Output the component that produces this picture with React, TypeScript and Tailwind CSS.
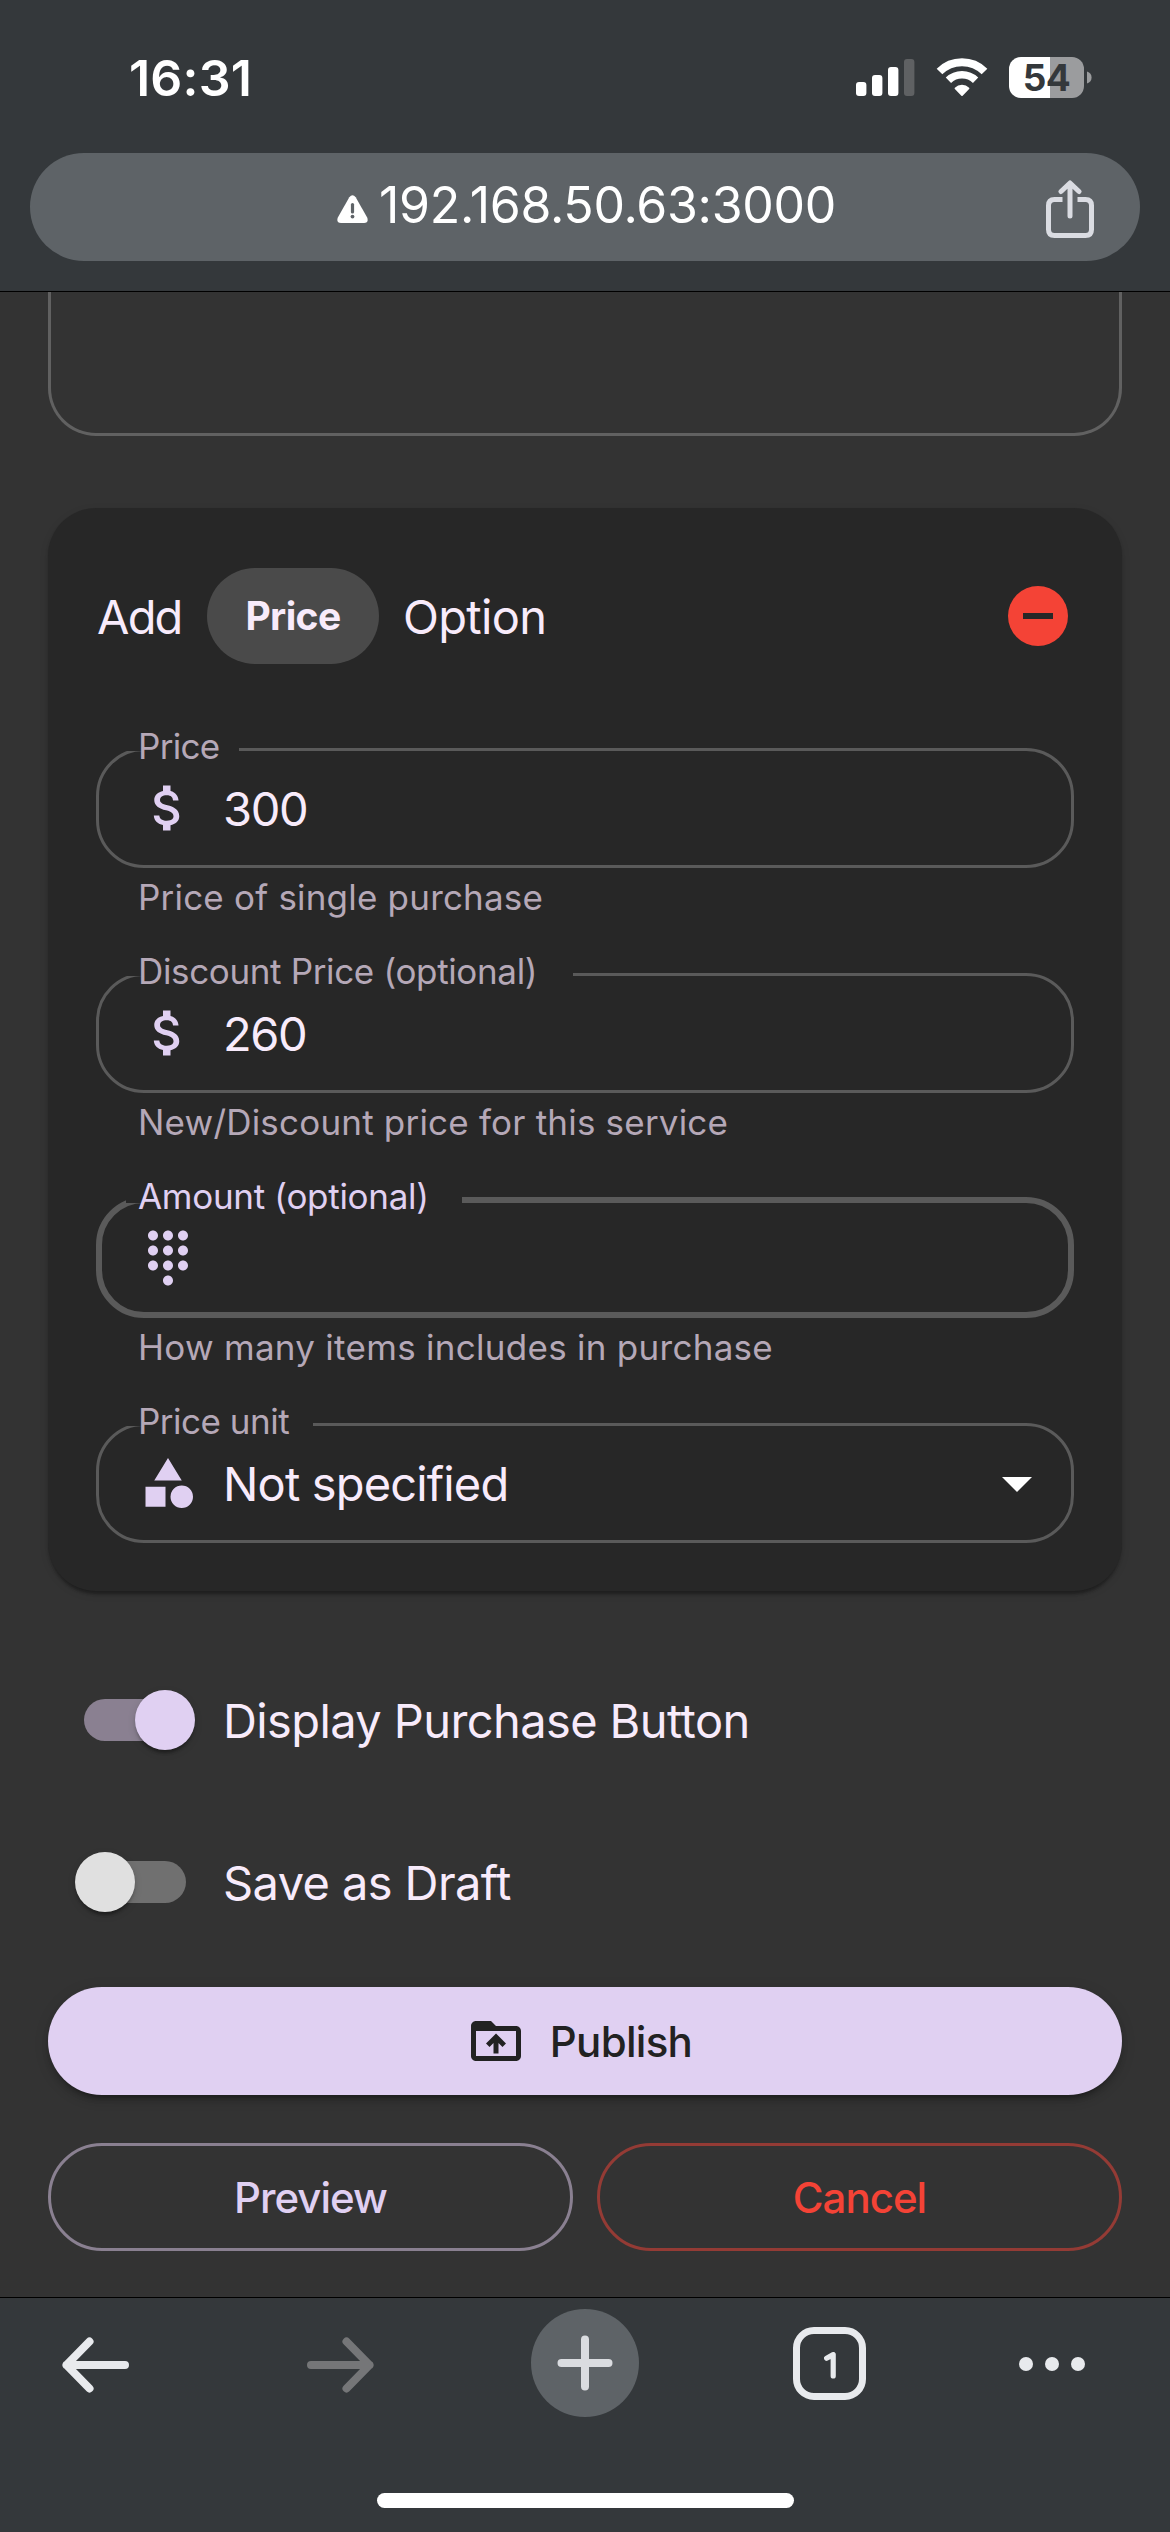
import React from "react";

const ICONS = {
  money:
    "M11.8 10.9c-2.27-.59-3-1.2-3-2.15 0-1.09 1.01-1.85 2.7-1.85 1.78 0 2.44.85 2.5 2.1h2.21c-.07-1.72-1.12-3.3-3.21-3.81V3h-3v2.16c-1.94.42-3.5 1.68-3.5 3.61 0 2.31 1.91 3.46 4.7 4.13 2.5.6 3 1.48 3 2.41 0 .69-.49 1.79-2.7 1.79-2.06 0-2.87-.92-2.98-2.1h-2.2c.12 2.19 1.76 3.42 3.68 3.83V21h3v-2.15c1.95-.37 3.5-1.5 3.5-3.55 0-2.84-2.43-3.81-4.7-4.4z",
  dialpad:
    "M12 19c-1.1 0-2 .9-2 2s.9 2 2 2 2-.9 2-2-.9-2-2-2zM6 1c-1.1 0-2 .9-2 2s.9 2 2 2 2-.9 2-2-.9-2-2-2zm0 6c-1.1 0-2 .9-2 2s.9 2 2 2 2-.9 2-2-.9-2-2-2zm0 6c-1.1 0-2 .9-2 2s.9 2 2 2 2-.9 2-2-.9-2-2-2zm12-8c1.1 0 2-.9 2-2s-.9-2-2-2-2 .9-2 2 .9 2 2 2zm-6 8c-1.1 0-2 .9-2 2s.9 2 2 2 2-.9 2-2-.9-2-2-2zm6 0c-1.1 0-2 .9-2 2s.9 2 2 2 2-.9 2-2-.9-2-2-2zm0-6c-1.1 0-2 .9-2 2s.9 2 2 2 2-.9 2-2-.9-2-2-2zm-6 0c-1.1 0-2 .9-2 2s.9 2 2 2 2-.9 2-2-.9-2-2-2zm0-6c-1.1 0-2 .9-2 2s.9 2 2 2 2-.9 2-2-.9-2-2-2z",
  category:
    "M12 2l-5.5 9h11zM17.5 13a4.5 4.5 0 1 0 0 9 4.5 4.5 0 0 0 0-9zM3 13.5h8v8H3z",
  folderUp:
    "M20 6h-8l-2-2H4c-1.1 0-1.99.9-1.99 2L2 18c0 1.1.9 2 2 2h16c1.1 0 2-.9 2-2V8c0-1.1-.9-2-2-2zm0 12H4V8h16v10zM8 13.01l1.41 1.41L11 12.84V17h2v-4.16l1.59 1.59L16 13.01 12.01 9 8 13.01z",
};

function Icon({ d, className }: { d: string; className: string }) {
  return (
    <svg viewBox="0 0 24 24" fill="currentColor" className={className}>
      <path d={d} />
    </svg>
  );
}

function StatusBar() {
  return (
    <div className="flex h-[153px] items-start justify-between pl-[129px] pr-[78px] pt-[57px] text-white">
      <span className="text-[50px] font-semibold leading-[42px] tracking-[0.2px]">16:31</span>
      <div className="flex items-start">
        <svg viewBox="0 0 59 41" className="h-[41px] w-[59px]" fill="white">
          <rect x="0" y="25" width="10.4" height="14" rx="3" />
          <rect x="16" y="18" width="10.4" height="21" rx="3" />
          <rect x="32" y="10" width="10.4" height="29" rx="3" />
          <rect x="48" y="2" width="10.4" height="37" rx="3" fill="#5f6163" />
        </svg>
        <svg viewBox="0 0 52 41" className="ml-[21px] h-[41px] w-[52px]" fill="none" stroke="white">
          <path d="M3.5 14.5 A32 32 0 0 1 48.5 14.5" strokeWidth="8" />
          <path d="M12.4 23.2 A19.6 19.6 0 0 1 39.6 23.2" strokeWidth="7.6" />
          <path
            d="M26 38 L19.5 31.4 A9.3 9.3 0 0 1 32.5 31.4 Z"
            fill="white"
            strokeWidth="1.8"
            strokeLinejoin="round"
          />
        </svg>
        <div className="ml-[21px] flex h-[41px] w-[75px] items-center justify-center rounded-[12px] bg-[linear-gradient(to_right,#fff_55%,#9b9c9e_55%)]">
          <span className="text-[37px] font-bold leading-[41px] tracking-[-0.5px] text-[#34383b]">54</span>
        </div>
        <svg viewBox="0 0 5 12" className="ml-[3px] mt-[14px] h-[13px] w-[5px]" fill="#9b9c9e">
          <path d="M0 0c3 .8 4.6 3.200 4.600 6s-1.600 5.200-4.600 6z" />
        </svg>
      </div>
    </div>
  );
}

function AddressBar() {
  return (
    <div className="mx-[30px] flex h-[108px] items-center rounded-full bg-[#5e6367]">
      <svg viewBox="0 0 31 28" className="ml-[307px] mt-[3px] h-[28px] w-[31px]">
        <path
          d="M12.300 2.200 Q15.500 -1.800 18.700 2.200 L30.300 22.800 Q31.800 28 27 28 H4 Q-.8 28 .7 22.800 Z"
          fill="white"
        />
        <path d="M15.500 9.500V17" stroke="#5e6367" strokeWidth="3.200" strokeLinecap="round" />
        <circle cx="15.500" cy="21.600" r="1.900" fill="#5e6367" />
      </svg>
      <span className="-mt-[4px] ml-[11px] w-[480px] text-[50px] leading-[60px] tracking-[-0.3px] whitespace-nowrap text-white">
        192.168.50.63:3000
      </span>
      <svg
        viewBox="0 0 48 58"
        className="ml-auto mr-[46px] mt-[4px] h-[58px] w-[48px]"
        fill="none"
        stroke="#dadce2"
        strokeWidth="5"
      >
        <path d="M16.500 19.500H8.500Q2.500 19.500 2.500 25.500V49.500Q2.500 55.500 8.500 55.500H39.500Q45.500 55.500 45.500 49.500V25.500Q45.500 19.500 39.500 19.500H31.500" />
        <path d="M24 36V4M15 11.500L24 3L33 11.500" strokeLinecap="round" strokeLinejoin="round" />
      </svg>
    </div>
  );
}

type FieldProps = {
  label: string;
  labelClass: string;
  legendClass: string;
  icon: string;
  value?: string;
  valueClass?: string;
  helper?: string;
  helperClass?: string;
  focused?: boolean;
  select?: boolean;
};

function Field({
  label,
  labelClass,
  legendClass,
  icon,
  value,
  valueClass = "",
  helper,
  helperClass = "",
  focused,
  select,
}: FieldProps) {
  return (
    <div>
      <div className="relative flex h-[120px] items-center pl-[42px] pr-[21px]">
        <Icon d={icon} className="size-[60px] text-[#e0d0f2]" />
        <span className={`ml-[25px] mt-[2px] text-[47px] leading-[60px] whitespace-nowrap text-[#f8ebfb] ${valueClass}`}>
          {value}
        </span>
        {select && <Icon d="M7 10l5 5 5-5z" className="ml-auto size-[72px] text-white" />}
        <fieldset
          className={`pointer-events-none absolute bottom-0 left-0 right-0 rounded-[48px] border-[#5a5a5a] px-[24px] ${
            focused ? "-top-px border-[6px]" : "top-0 border-[3px]"
          }`}
        >
          <legend className={`${focused ? "h-[6px]" : "h-[3px]"} ${legendClass}`} />
        </fieldset>
        <label
          className={`absolute -top-[20px] left-[42px] text-[35px] leading-[36px] whitespace-nowrap ${
            focused ? "text-[#e0d0f2]" : "text-[#b5a8b7]"
          } ${labelClass}`}
        >
          {label}
        </label>
      </div>
      {helper && (
        <p className={`h-[105px] pl-[42px] pt-[10px] text-[35px] leading-[39px] whitespace-nowrap text-[#b5a8b7] ${helperClass}`}>
          {helper}
        </p>
      )}
    </div>
  );
}

function PriceCard() {
  return (
    <section className="mt-[72px] rounded-[48px] bg-[#272727] px-[48px] pb-[48px] pt-[60px] shadow-[0_6px_3px_-3px_rgba(0,0,0,0.2),0_3px_3px_0_rgba(0,0,0,0.14),0_3px_9px_0_rgba(0,0,0,0.12)]">
      <div className="mb-[84px] flex h-[96px] items-center text-[47px] leading-[60px] text-[#f8ebfb]">
        <span className="mt-[2px] w-[111px] pl-px tracking-[-1.8px]">Add</span>
        <span className="flex h-[96px] w-[172px] items-center justify-center rounded-full bg-[#4a4a4a] text-[39px] font-bold tracking-[-0.6px]">
          Price
        </span>
        <span className="ml-[24px] mt-[2px] tracking-[-0.7px]">Option</span>
        <span className="ml-auto mr-[6px] flex size-[60px] items-center justify-center rounded-full bg-[#f44336]">
          <span className="h-[6px] w-[30px] bg-[#272727]" />
        </span>
      </div>
      <Field
        label="Price"
        labelClass="tracking-[-0.7px]"
        legendClass="w-[116px]"
        icon={ICONS.money}
        value="300"
        valueClass="tracking-[-1.4px]"
        helper="Price of single purchase"
        helperClass="tracking-[0.2px]"
      />
      <Field
        label="Discount Price (optional)"
        labelClass="tracking-[-0.35px]"
        legendClass="w-[450px]"
        icon={ICONS.money}
        value="260"
        valueClass="tracking-[-1.4px]"
        helper="New/Discount price for this service"
        helperClass="tracking-[0.2px]"
      />
      <Field
        label="Amount (optional)"
        labelClass="tracking-[-0.3px]"
        legendClass="w-[336px]"
        icon={ICONS.dialpad}
        helper="How many items includes in purchase"
        helperClass="tracking-[0.28px]"
        focused
      />
      <Field
        label="Price unit"
        labelClass="tracking-[-0.5px]"
        legendClass="w-[190px]"
        icon={ICONS.category}
        value="Not specified"
        valueClass="tracking-[-0.85px]"
        select
      />
    </section>
  );
}

const thumbShadow =
  "shadow-[0_6px_3px_-3px_rgba(0,0,0,0.2),0_3px_3px_0_rgba(0,0,0,0.14),0_3px_9px_0_rgba(0,0,0,0.12)]";

function ToggleRow({ label, on }: { label: string; on: boolean }) {
  return (
    <div className="flex h-[162px] items-center pl-[36px]">
      <div
        className={`flex h-[42px] w-[102px] items-center rounded-full ${
          on ? "justify-end bg-[#8a8091]" : "justify-start bg-[#707070]"
        }`}
      >
        <span
          className={`size-[60px] shrink-0 rounded-full ${thumbShadow} ${
            on ? "-mr-[9px] bg-[#e0d0f2]" : "-ml-[9px] bg-[#e0e0e0]"
          }`}
        />
      </div>
      <span className="ml-[37px] mt-[2px] text-[47px] leading-[60px] tracking-[-0.6px] whitespace-nowrap text-[#f8ebfb]">
        {label}
      </span>
    </div>
  );
}

function BottomBar() {
  return (
    <nav className="flex h-[235px] flex-col border-t border-black bg-[#34383b]">
      <div className="mt-[11px] flex h-[108px] items-center">
        <svg viewBox="0 0 67 56" className="ml-[62px] mt-[3px] h-[56px] w-[67px]" fill="none" stroke="#e8eaed" strokeWidth="8" strokeLinecap="round" strokeLinejoin="round">
          <path d="M63 28H4.500M27.500 4.500L4.500 28L27.500 51.500" />
        </svg>
        <svg viewBox="0 0 67 56" className="ml-[178px] mt-[3px] h-[56px] w-[67px]" fill="none" stroke="#757678" strokeWidth="8" strokeLinecap="round" strokeLinejoin="round">
          <path d="M4 28H62.500M39.500 4.500L62.500 28L39.500 51.500" />
        </svg>
        <div className="ml-[157px] flex size-[108px] items-center justify-center rounded-full bg-[#5e6367]">
          <svg viewBox="0 0 56 56" className="size-[56px]" stroke="#dadce0" strokeWidth="8" strokeLinecap="round">
            <path d="M28 4.500V51.500M4.500 28H51.500" />
          </svg>
        </div>
        <div className="ml-[154px] mt-px flex size-[73px] items-center justify-center rounded-[21px] border-[7px] border-[#e8eaed] text-[#e8eaed]">
          <svg viewBox="0 0 12 27" className="mt-[3px] h-[27px] w-[12px]" fill="none" stroke="currentColor" strokeWidth="5.200" strokeLinecap="round" strokeLinejoin="round">
            <path d="M2.600 6.200L9.200 2.600V24" />
          </svg>
        </div>
        <div className="ml-[153px] mt-[2px] flex gap-[12px]">
          <span className="size-[14px] rounded-full bg-[#e8eaed]" />
          <span className="size-[14px] rounded-full bg-[#e8eaed]" />
          <span className="size-[14px] rounded-full bg-[#e8eaed]" />
        </div>
      </div>
      <div className="mx-auto mt-[76px] h-[15px] w-[417px] rounded-full bg-white" />
    </nav>
  );
}

export default function App() {
  return (
    <div className="flex h-[2532px] w-[1170px] flex-col overflow-hidden bg-[#333333] font-['Inter',sans-serif]">
      <header className="h-[292px] shrink-0 border-b border-black bg-[#34383b]">
        <StatusBar />
        <AddressBar />
      </header>
      <main className="flex-1 px-[48px]">
        <div className="h-[144px] rounded-b-[48px] border-[3px] border-t-0 border-[#616161]" />
        <PriceCard />
        <div className="mt-[48px]">
          <ToggleRow on label="Display Purchase Button" />
          <ToggleRow on={false} label="Save as Draft" />
        </div>
        <button className="mt-[24px] flex h-[108px] w-full items-center justify-center rounded-full bg-[#e0d0f2] pr-[12px] text-[42px] font-medium text-[#222222] shadow-[0_9px_3px_-6px_rgba(0,0,0,0.2),0_6px_6px_0_rgba(0,0,0,0.14),0_3px_15px_0_rgba(0,0,0,0.12)]">
          <Icon d={ICONS.folderUp} className="mr-[24px] size-[60px]" />
          <span className="tracking-[-0.7px]">Publish</span>
        </button>
        <div className="mt-[48px] grid grid-cols-2 gap-[24px] text-[42px] font-medium tracking-[-1px]">
          <button className="h-[108px] rounded-full border-[3px] border-[#8a8091] text-[#e0d0f2]">Preview</button>
          <button className="h-[108px] rounded-full border-[3px] border-[#943b35] text-[#f44336]">Cancel</button>
        </div>
      </main>
      <BottomBar />
    </div>
  );
}
